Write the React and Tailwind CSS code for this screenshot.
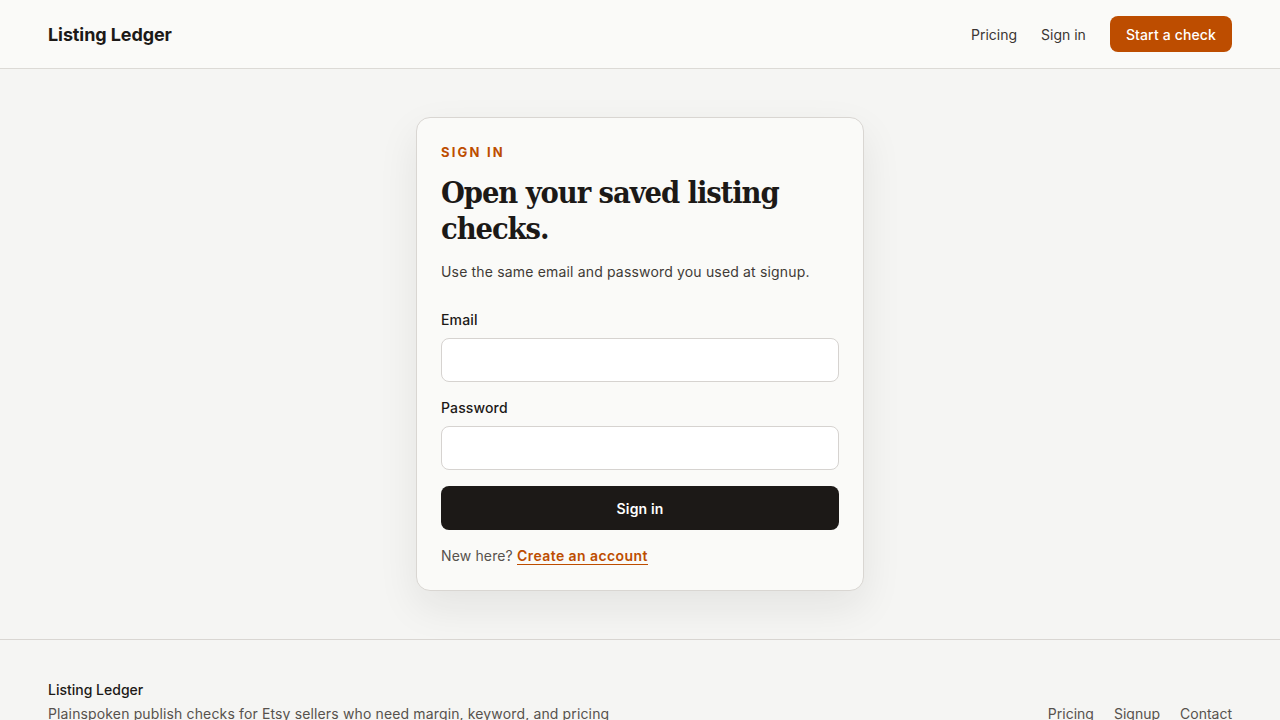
import { useState } from 'react';

const sans = { fontFamily: 'Inter, "Noto Sans", sans-serif' };

const Header = () => (
  <header className="h-[69px] bg-[#fafaf8] border-b border-[#dcdad6] flex items-center justify-between px-12">
    <a href="#" className="text-[18px] font-bold text-[#1c1917] tracking-[-0.005em]">Listing Ledger</a>
    <nav className="flex items-center gap-6 text-[14px] text-[#3a3633]">
      <a href="#">Pricing</a>
      <a href="#">Sign in</a>
      <a href="#" className="h-9 px-4 flex items-center rounded-lg bg-[#bd4d00] text-white font-medium tracking-[0.01em]">Start a check</a>
    </nav>
  </header>
);

const Field = ({ label, type, value, onChange }) => (
  <label className="block">
    <span className="block text-[14px] font-medium text-[#1c1917] leading-5 tracking-[0.01em]">{label}</span>
    <input
      type={type}
      value={value}
      onChange={(e) => onChange(e.target.value)}
      className="mt-2 w-full h-11 rounded-lg border border-[#d6d3d0] bg-white px-3 text-[14px] outline-none focus:border-[#bd4d00]"
    />
  </label>
);

const SignInCard = () => {
  const [email, setEmail] = useState('');
  const [password, setPassword] = useState('');

  return (
    <div className="w-[448px] bg-[#fafaf8] border border-[#d9d6d2] rounded-[14px] p-6 shadow-[0_16px_40px_rgba(28,25,23,0.08)]">
      <p className="text-[13px] font-bold tracking-[0.17em] text-[#bd4d00] leading-5">SIGN IN</p>
      <h1
        className="mt-3 text-[30.5px] leading-[36px] font-bold text-[#1c1917] tracking-[-0.035em] font-stretch-condensed"
        style={{ fontFamily: '"DejaVu Serif Condensed", "DejaVu Serif", Georgia, serif' }}
      >
        Open your saved listing checks.
      </h1>
      <p className="mt-4 text-[14px] leading-5 text-[#3f3a36] tracking-[0.012em]">Use the same email and password you used at signup.</p>

      <form className="mt-7 flex flex-col gap-4" onSubmit={(e) => e.preventDefault()}>
        <Field label="Email" type="email" value={email} onChange={setEmail} />
        <Field label="Password" type="password" value={password} onChange={setPassword} />
        <button type="submit" className="h-11 rounded-lg bg-[#1c1917] text-white text-[14px] font-semibold tracking-[0.01em]">
          Sign in
        </button>
      </form>

      <p className="mt-4 text-[14px] leading-5 text-[#57524d] tracking-[0.01em]">
        New here?{' '}
        <a href="#" className="font-semibold text-[#bd4d00] border-b border-[#bd4d00] tracking-[0.03em]">Create an account</a>
      </p>
    </div>
  );
};

const Footer = () => (
  <footer className="border-t border-[#d9d6d2] bg-[#f5f5f3] px-12 pt-10 pb-10 flex items-end justify-between">
    <div>
      <p className="text-[14px] font-medium text-[#1c1917] leading-5">Listing Ledger</p>
      <p className="mt-1 text-[14px] text-[#57524d] leading-5 tracking-[0.01em]">
        Plainspoken publish checks for Etsy sellers who need margin, keyword, and pricing
        <br />
        clarity before a listing goes live.
      </p>
    </div>
    <nav className="flex gap-5 text-[14px] text-[#57524d] mb-5">
      <a href="#">Pricing</a>
      <a href="#">Signup</a>
      <a href="#">Contact</a>
    </nav>
  </footer>
);

export default function App() {
  return (
    <div className="min-h-screen bg-[#f5f5f3]" style={sans}>
      <Header />
      <main className="flex justify-center py-12">
        <SignInCard />
      </main>
      <Footer />
    </div>
  );
}
